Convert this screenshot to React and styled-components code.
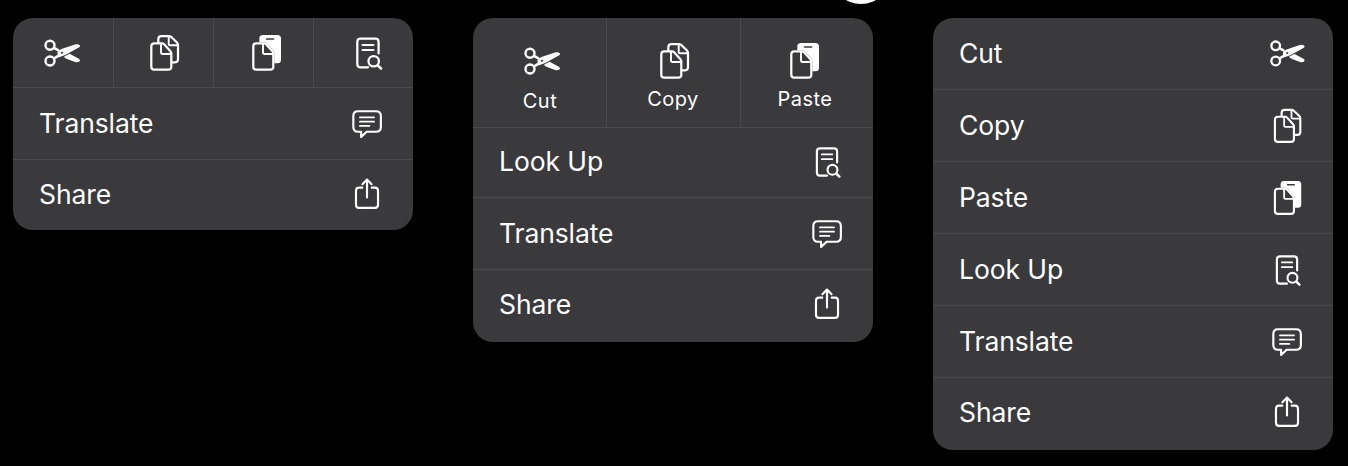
import React from "react";
import styled, { createGlobalStyle } from "styled-components";

const Global = createGlobalStyle`
  * { box-sizing: border-box; }
  body { margin: 0; background: #000; }
`;

const Page = styled.main`
  position: relative;
  width: 1348px;
  height: 466px;
  padding: 18px 15px 0 13px;
  overflow: hidden;
  background: #000;
  color: #fff;
  font-family: Inter, "Liberation Sans", sans-serif;
  display: flex;
  align-items: flex-start;
  gap: 60px;
`;

const Knob = styled.div`
  position: absolute;
  left: 831px;
  top: -56px;
  width: 60px;
  height: 60px;
  border-radius: 50%;
  background: #fff;
`;

const Menu = styled.section`
  width: 400px;
  flex: none;
  border-radius: 20px;
  overflow: hidden;
  background: #3a3a3c;
`;

const Actions = styled.div`
  display: grid;
  grid-template-columns: ${(p) => p.$columns};
  height: ${(p) => p.$height}px;
  border-bottom: 1px solid #4a4a4c;
`;

const Action = styled.div`
  display: flex;
  flex-direction: column;
  align-items: center;
  padding-top: ${(p) => p.$top}px;
  padding-left: ${(p) => p.$left || 0}px;
  padding-right: ${(p) => p.$right || 0}px;
  &:not(:last-child) { border-right: 1px solid #4a4a4c; }
`;

const Caption = styled.span`
  font-size: 20px;
  line-height: 24px;
  letter-spacing: 0.5px;
  margin-top: ${(p) => p.$gap}px;
  margin-left: ${(p) => p.$shift || 0}px;
  white-space: nowrap;
`;

const Row = styled.div`
  display: flex;
  align-items: center;
  justify-content: space-between;
  height: ${(p) => p.$height}px;
  padding: 0 26px ${(p) => p.$bottom || 0}px 26px;
  &:not(:last-child) { border-bottom: 1px solid #4a4a4c; }
`;

const Label = styled.span`
  font-size: 26.5px;
  line-height: 32px;
  letter-spacing: -0.1px;
  padding-bottom: 2px;
`;

const IconSlot = styled.span`
  width: 40px;
  display: flex;
  justify-content: center;
  padding-left: ${(p) => p.$nudge || 0}px;
`;

const Glyph = styled.svg`
  display: block;
  flex: none;
  width: ${(p) => p.$size}px;
  height: ${(p) => p.$size}px;
  fill: none;
  stroke: #fff;
  stroke-width: 2.25;
  stroke-linecap: round;
  stroke-linejoin: round;
`;

const frontPage = (
  <>
    <path d="M10.3 10.3H18.3Q19.3 10.3 20.1 11.2L26.4 18.2Q27.3 19.2 27.3 20.6V33.7Q27.3 36.7 24.3 36.7H10.3Q7.3 36.7 7.3 33.7V13.3Q7.3 10.3 10.3 10.3Z" />
    <path strokeWidth="1.9" d="M17 10.6V19.8Q17 21 18.2 21H27" />
  </>
);

const drawings = {
  cut: (
    <>
      <circle cx="8" cy="12.3" r="4.5" strokeWidth="2.4" />
      <circle cx="8" cy="28" r="4.5" strokeWidth="2.4" />
      <path d="M12 14.8L16 17.1M12 25.4L18 22" strokeWidth="2.6" />
      <path stroke="none" fill="#fff" d="M15.6 19.6Q16.6 17 19.3 16L32.2 11.7Q36 10.6 38 12.5Q38.1 13.8 36.8 14.6L23.3 22.1L17.6 24Q15 23 15.6 19.6Z" />
      <path stroke="none" fill="#fff" d="M21.8 23.7L27.6 20.8L36.8 25.7Q38.1 26.6 38 27.7Q36.4 30 33.2 29L25 26Q22.8 25.2 21.8 23.7Z" />
      <circle cx="20" cy="19.8" r="1.1" fill="#3a3a3c" stroke="none" />
    </>
  ),
  copy: (
    <>
      <path d="M14.3 9.8V6.2Q14.3 3 17.5 3H24.8Q26.1 3 27.1 3.9L32.8 9.2Q34 10.4 34 12V26.3Q34 29.3 31 29.3H28" />
      <path strokeWidth="1.9" d="M24.7 3.4V10.9Q24.7 12.2 26 12.2H33.6" />
      {frontPage}
    </>
  ),
  paste: (
    <>
      <path stroke="none" fill="#fff" d="M17 2H31.4Q35 2 35 5.6V26.8Q35 30.3 31.5 30.3H28.3V20Q28.3 18.6 27.3 17.5L20.4 10Q19.7 9.3 18.5 9.3H13.3V5.6Q13.3 2 17 2Z" />
      <path stroke="#3a3a3c" strokeWidth="1.6" d="M20.6 6H27.6" />
      {frontPage}
    </>
  ),
  lookup: (
    <>
      <path d="M19 34.3H11.6Q8.3 34.3 8.3 31V9Q8.3 5.7 11.6 5.7H26.3Q29.6 5.7 29.6 9V20.4" />
      <path strokeWidth="1.9" d="M13.5 12H24.5M13.5 17H24.5" />
      <circle cx="24.7" cy="28.2" r="5.2" />
      <path strokeWidth="2.6" d="M28.8 32.3L32 35.5" />
    </>
  ),
  translate: (
    <>
      <path d="M10.5 6.6H29.5Q34.6 6.6 34.6 11.6V23.2Q34.6 28.2 29.5 28.2H19.6L13.8 33.6V28.2H10.5Q5.6 28.2 5.6 23.2V11.6Q5.6 6.6 10.5 6.6Z" />
      <path strokeWidth="1.9" d="M12.6 13.1H27.4M12.6 17.6H27.4M12.6 22H22.5" />
    </>
  ),
  share: (
    <>
      <path d="M15 12.3H11.7Q8.4 12.3 8.4 15.8V30.2Q8.4 33.5 11.7 33.5H28.3Q31.6 33.5 31.6 30.2V15.8Q31.6 12.3 28.3 12.3H25" />
      <path d="M20 22.5V4.2M15.2 8.6L20 3.8L24.8 8.6" />
    </>
  ),
};

const Icon = ({ name, size = 40 }) => (
  <Glyph $size={size} viewBox="0 0 40 40" aria-hidden="true">{drawings[name]}</Glyph>
);

const rowKinds = {
  Cut: { icon: "cut", size: 38.5 },
  Copy: { icon: "copy", size: 38 },
  Paste: { icon: "paste", size: 38 },
  "Look Up": { icon: "lookup", size: 38, nudge: 2 },
  Translate: { icon: "translate", size: 38 },
  Share: { icon: "share", size: 38 },
};

const MenuRow = ({ label, height, bottom }) => {
  const { icon, size, nudge } = rowKinds[label];
  return (
    <Row $height={height} $bottom={bottom}>
      <Label>{label}</Label>
      <IconSlot $nudge={nudge}><Icon name={icon} size={size} /></IconSlot>
    </Row>
  );
};

export default function App() {
  return (
    <>
      <Global />
      <Page>
        <Knob />
        <Menu>
          <Actions $columns="101px 100px 100px 99px" $height={70}>
            <Action $top={15} $right={2}><Icon name="cut" /></Action>
            <Action $top={15} $left={1}><Icon name="copy" /></Action>
            <Action $top={15} $left={5}><Icon name="paste" /></Action>
            <Action $top={15} $left={11}><Icon name="lookup" /></Action>
          </Actions>
          <MenuRow label="Translate" height={72} />
          <MenuRow label="Share" height={70} />
        </Menu>
        <Menu>
          <Actions $columns="134px 134px 132px" $height={110}>
            <Action $top={23} $left={5}>
              <Icon name="cut" />
              <Caption $gap={8} $shift={-4}>Cut</Caption>
            </Action>
            <Action $top={23} $left={1}>
              <Icon name="copy" />
              <Caption $gap={6} $shift={-2}>Copy</Caption>
            </Action>
            <Action $top={23} $right={6}>
              <Icon name="paste" />
              <Caption $gap={6} $shift={2}>Paste</Caption>
            </Action>
          </Actions>
          <MenuRow label="Look Up" height={70} bottom={2} />
          <MenuRow label="Translate" height={72} />
          <MenuRow label="Share" height={72} bottom={2} />
        </Menu>
        <Menu>
          {Object.keys(rowKinds).map((label) => (
            <MenuRow key={label} label={label} height={72} bottom={label === "Share" ? 2 : 0} />
          ))}
        </Menu>
      </Page>
    </>
  );
}
